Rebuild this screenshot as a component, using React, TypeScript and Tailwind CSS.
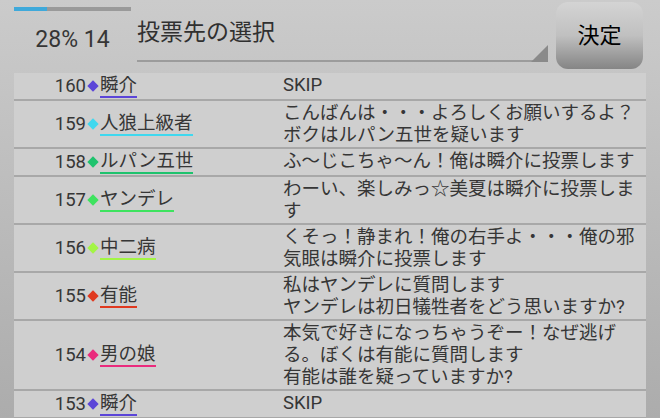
import React from "react";

const rows = [
  { no: 160, name: "瞬介", color: "#5b45d8", msg: ["SKIP"] },
  { no: 159, name: "人狼上級者", color: "#3fd8ef", msg: ["こんばんは・・・よろしくお願いするよ？", "ボクはルパン五世を疑います"] },
  { no: 158, name: "ルパン五世", color: "#1fc36e", msg: ["ふ～じこちゃ～ん！俺は瞬介に投票します"] },
  { no: 157, name: "ヤンデレ", color: "#3ee35f", msg: ["わーい、楽しみっ☆美夏は瞬介に投票します"] },
  { no: 156, name: "中二病", color: "#a3f545", msg: ["くそっ！静まれ！俺の右手よ・・・俺の邪気眼は瞬介に投票します"] },
  { no: 155, name: "有能", color: "#e0391f", msg: ["私はヤンデレに質問します", "ヤンデレは初日犠牲者をどう思いますか?"] },
  { no: 154, name: "男の娘", color: "#ea2b7d", msg: ["本気で好きになっちゃうぞー！なぜ逃げる。ぼくは有能に質問します", "有能は誰を疑っていますか?"] },
  { no: 153, name: "瞬介", color: "#5b45d8", msg: ["SKIP"] },
];

export default function App() {
  return (
    <div
      className="w-[660px] h-[418px] overflow-hidden bg-gradient-to-b from-[#cbcbcb] to-[#acacac] text-[#363636]"
      style={{ fontFamily: 'Roboto, "Noto Sans CJK JP", sans-serif' }}
    >
      <div className="flex h-[73px] pl-[14px]">
        <div className="w-[117px] flex flex-col">
          <div className="mt-[7px] h-[4px] bg-[#9a9a9a] flex">
            <div className="w-[33px] bg-[#3fa9da]" />
          </div>
          <div className="mt-[15px] text-center text-[23px] leading-[28px]">28% 14</div>
        </div>
        <div className="ml-[6px] w-[411px] h-[62px] relative border-b-2 border-[#9c9c9c]">
          <div className="pt-[18px] text-[23px] leading-[30px] text-[#303030]">投票先の選択</div>
          <svg className="absolute right-0 bottom-[-2px]" width="17" height="17" viewBox="0 0 17 17">
            <polygon points="0,17 17,0 17,17" fill="#8a8a8a" />
          </svg>
        </div>
        <button className="ml-[8px] mt-[2px] w-[87px] h-[67px] rounded-[12px] bg-gradient-to-b from-[#d4d4d4] via-[#c0c0c0] to-[#858585] text-[22px] text-black">
          決定
        </button>
      </div>
      <div className="ml-[14px] w-[632px] bg-[#cfcfcf]">
        {rows.map((r, i) => (
          <div key={i} className="flex border-b-2 border-[#a8a8a8] py-[1px] text-[18.5px] leading-[22px]">
            <div className="w-[72px] flex items-center justify-end">{r.no}</div>
            <div className="w-[197px] flex items-center">
              <span className="w-[14px] flex justify-center">
                <span className="block w-[8px] h-[8px] rotate-45" style={{ backgroundColor: r.color }} />
              </span>
              <span className="border-b-2" style={{ borderColor: r.color }}>
                {r.name}
              </span>
            </div>
            <div className="w-[358px]">
              {r.msg.map((m, j) => (
                <div key={j}>{m}</div>
              ))}
            </div>
          </div>
        ))}
      </div>
    </div>
  );
}
